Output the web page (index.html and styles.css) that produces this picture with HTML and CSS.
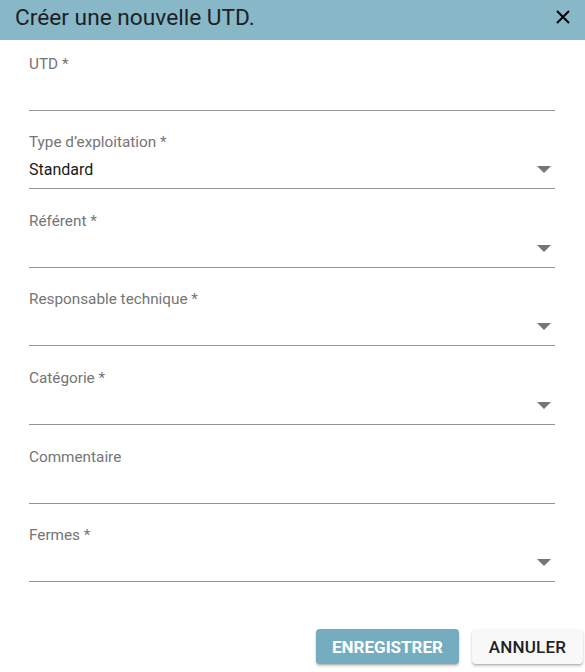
FILE: index.html
```html
<!DOCTYPE html>
<html lang="fr">
<head>
<meta charset="utf-8">
<title>Créer une nouvelle UTD.</title>
<link rel="stylesheet" href="styles.css">
</head>
<body>
<div class="dialog">
  <header class="dialog-header">
    <h1 class="dialog-title">Créer une nouvelle UTD.</h1>
    <button class="close-btn" aria-label="Fermer">
      <svg width="14" height="14" viewBox="0 0 14 14"><path d="M1 1 L13 13 M13 1 L1 13" stroke="#000" stroke-width="2" fill="none"/></svg>
    </button>
  </header>
  <form class="dialog-body">
    <div class="field">
      <div class="field-label">UTD *</div>
      <div class="field-input"><span class="field-value"></span></div>
    </div>
    <div class="field">
      <div class="field-label">Type d’exploitation *</div>
      <div class="field-input"><span class="field-value">Standard</span><span class="arrow"></span></div>
    </div>
    <div class="field">
      <div class="field-label">Référent *</div>
      <div class="field-input"><span class="field-value"></span><span class="arrow"></span></div>
    </div>
    <div class="field">
      <div class="field-label">Responsable technique *</div>
      <div class="field-input"><span class="field-value"></span><span class="arrow"></span></div>
    </div>
    <div class="field">
      <div class="field-label">Catégorie *</div>
      <div class="field-input"><span class="field-value"></span><span class="arrow"></span></div>
    </div>
    <div class="field">
      <div class="field-label">Commentaire</div>
      <div class="field-input"><span class="field-value"></span></div>
    </div>
    <div class="field">
      <div class="field-label">Fermes *</div>
      <div class="field-input"><span class="field-value"></span><span class="arrow"></span></div>
    </div>
  </form>
  <footer class="dialog-actions">
    <button class="btn btn-primary">Enregistrer</button>
    <button class="btn btn-secondary">Annuler</button>
  </footer>
</div>
</body>
</html>
```
FILE: styles.css
```css
html, body {
  margin: 0;
  padding: 0;
  background: #ffffff;
  overflow: hidden;
}
body {
  font-family: Roboto, "Liberation Sans", sans-serif;
  width: 585px;
  height: 672px;
}
.dialog {
  display: flex;
  flex-direction: column;
}
.dialog-header {
  height: 40px;
  background: #88b7c7;
  display: flex;
  align-items: center;
  justify-content: space-between;
  padding: 0 15px 0 15px;
}
.dialog-title {
  margin: 0;
  font-size: 22.7px;
  font-weight: 400;
  color: #1c2126;
  line-height: 24px;
  position: relative;
  top: -2px;
}
.close-btn {
  background: none;
  border: 0;
  padding: 0;
  margin: 0;
  width: 14px;
  height: 14px;
  display: flex;
  position: relative;
  top: -3px;
}
.dialog-body {
  padding: 14.5px 30px 0 29px;
  display: flex;
  flex-direction: column;
  gap: 22.67px;
}
.field {
  display: flex;
  flex-direction: column;
}
.field-label {
  font-size: 15.3px;
  line-height: 18px;
  color: #757575;
}
.field-input {
  margin-top: 3px;
  padding: 4px 0 6px 0;
  border-bottom: 1px solid #949494;
  display: flex;
  align-items: center;
  justify-content: space-between;
}
.field-value {
  font-size: 16px;
  line-height: 24px;
  height: 24px;
  color: #1a1a1a;
}
.arrow {
  width: 0;
  height: 0;
  border-left: 7px solid transparent;
  border-right: 7px solid transparent;
  border-top: 7px solid #757575;
  margin-right: 4px;
  margin-top: -1px;
}
.dialog-actions {
  display: flex;
  justify-content: flex-end;
  gap: 13px;
  padding: 0 2px 0 0;
  margin-top: 47px;
}
.btn {
  font-family: Roboto, "Liberation Sans", sans-serif;
  font-size: 17px;
  font-weight: 500;
  letter-spacing: 0.2px;
  text-transform: uppercase;
  height: 35px;
  border: 0;
  border-radius: 4px;
  padding: 0;
  box-shadow: 0 2px 3px rgba(0,0,0,0.22), 0 1px 1px rgba(0,0,0,0.1);
}
.btn-primary {
  background: #74adc0;
  color: #ffffff;
  width: 143px;
  font-weight: 700;
  letter-spacing: 0;
}
.btn-secondary {
  background: #f8f8f8;
  color: #212121;
  width: 111px;
}
```
